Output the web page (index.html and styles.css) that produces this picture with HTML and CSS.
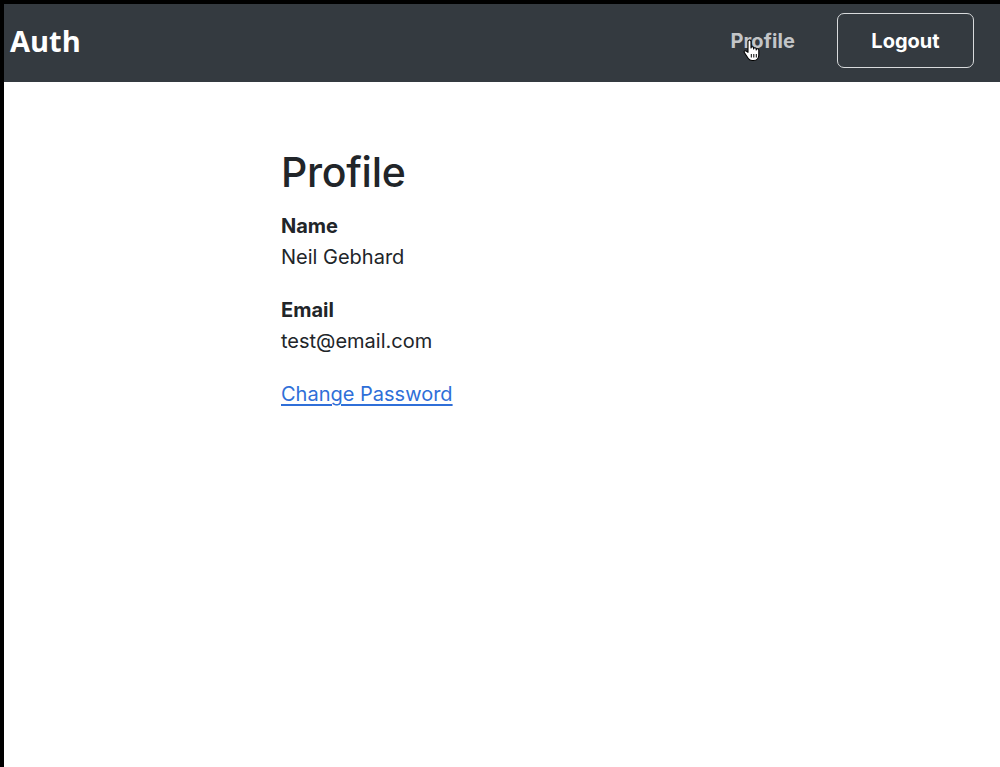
FILE: index.html
```html
<!DOCTYPE html>
<html lang="en">
<head>
<meta charset="utf-8">
<title>Auth - Profile</title>
<link rel="stylesheet" href="styles.css">
</head>
<body>
<div class="page">
  <nav class="navbar">
    <a class="brand" href="#">Auth</a>
    <div class="nav-right">
      <a class="nav-link" href="#">Profile
        <svg class="cursor" width="20" height="23" viewBox="0 0 20 23" aria-hidden="true">
          <path d="M6 2.5a1.5 1.5 0 0 1 3 0V9a1.3 1.3 0 0 1 2.6 0v1a1.3 1.3 0 0 1 2.6 0v1a1.3 1.3 0 0 1 2.6 0V16c0 3-2 5.5-5 5.5H10c-1.6 0-2.8-.7-3.7-2L2.3 13.5c-.7-1 .4-2.2 1.5-1.6L6 13.3Z" fill="#fff" stroke="#000" stroke-width="1.1" stroke-linejoin="round"/>
          <path d="M9.3 15v3.5M11.8 15v3.5M14.3 15v3.5" stroke="#000" stroke-width="1"/>
        </svg>
      </a>
      <button class="btn-logout" type="button">Logout</button>
    </div>
  </nav>
  <main class="content">
    <h1 class="title">Profile</h1>
    <div class="field">
      <div class="label">Name</div>
      <div class="value">Neil Gebhard</div>
    </div>
    <div class="field">
      <div class="label">Email</div>
      <div class="value">test@email.com</div>
    </div>
    <a class="link" href="#">Change Password</a>
  </main>
</div>
</body>
</html>
```
FILE: styles.css
```css
* { box-sizing: border-box; }
html, body { margin: 0; padding: 0; }
body {
  background: #000;
  font-family: Inter, "Noto Sans", "Liberation Sans", sans-serif;
  color: #212529;
}
.page {
  margin: 4px 0 0 4px;
  background: #fff;
  min-height: 763px;
}
.navbar {
  height: 78px;
  background: #343a40;
  display: flex;
  align-items: center;
  justify-content: space-between;
  padding: 0 26px 5px 6px;
}
.brand {
  font-family: "Open Sans", Inter, sans-serif;
  font-weight: 700;
  font-size: 29px;
  color: #fff;
  text-decoration: none;
  letter-spacing: 0;
}
.nav-right {
  display: flex;
  align-items: center;
  gap: 42px;
}
.nav-link {
  position: relative;
  color: #c3c5c8;
  font-weight: 700;
  font-size: 20px;
  letter-spacing: 0.1px;
  text-decoration: none;
  margin-left: -2px;
}
.cursor {
  position: absolute;
  left: 11px;
  top: 10px;
}
.btn-logout {
  width: 137px;
  height: 55px;
  background: transparent;
  border: 1.5px solid #d8dadc;
  border-radius: 7px;
  color: #fff;
  font-family: Inter, "Noto Sans", sans-serif;
  font-weight: 700;
  font-size: 20px;
  cursor: pointer;
}
.content {
  padding: 66px 0 0 277px;
}
.title {
  margin: 0 0 14px;
  font-size: 41px;
  font-weight: 500;
  line-height: 1.2;
  letter-spacing: -0.3px;
}
.field {
  margin-bottom: 22px;
}
.label {
  font-weight: 700;
  font-size: 20px;
  line-height: 31px;
}
.value {
  font-size: 20px;
  line-height: 31px;
}
.link {
  display: inline-block;
  font-size: 20px;
  line-height: 31px;
  color: #2f6fd8;
  text-decoration: underline;
  text-underline-offset: 3px;
}
```
